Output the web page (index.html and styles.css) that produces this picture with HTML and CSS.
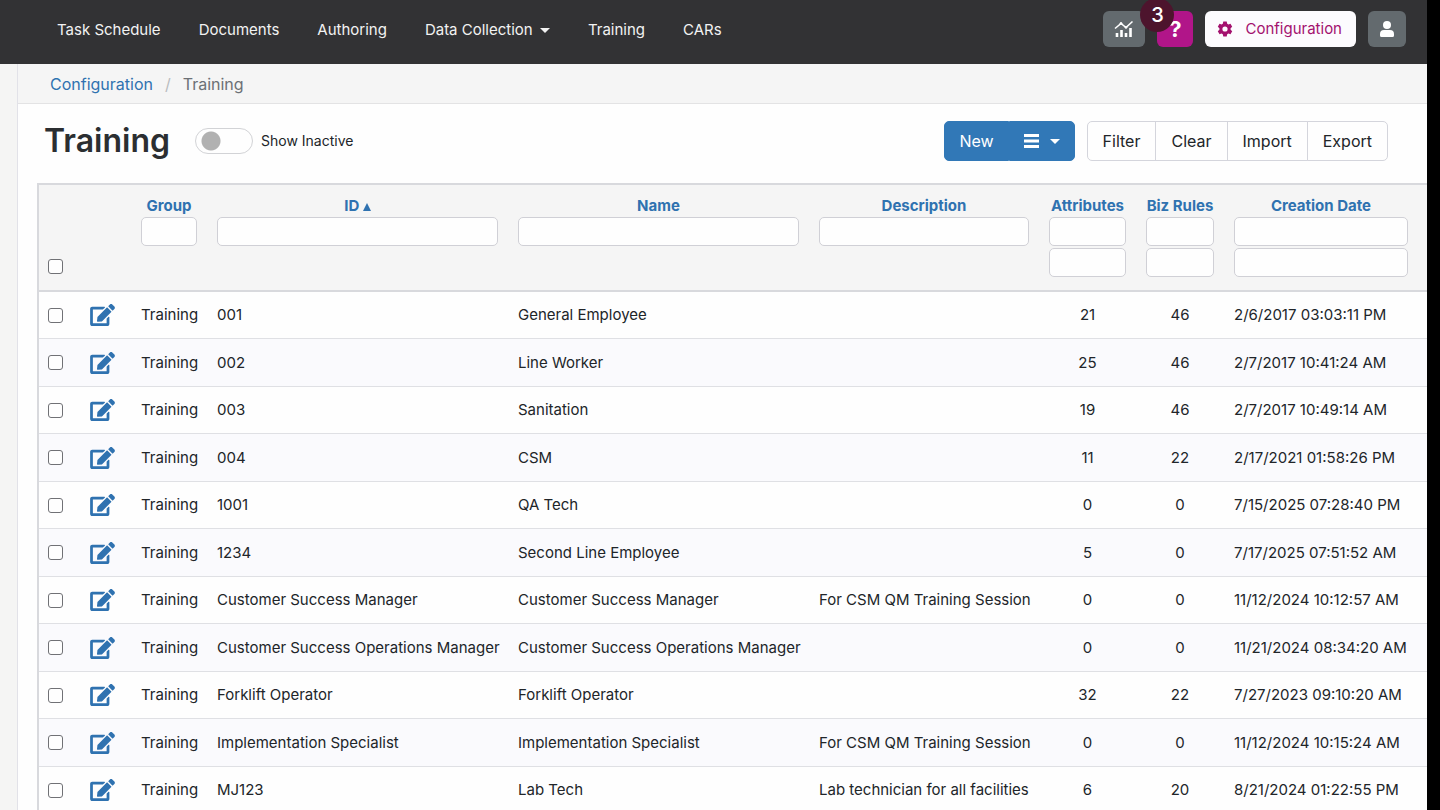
FILE: index.html
```html
<!DOCTYPE html>
<html lang="en">
<head>
<meta charset="utf-8">
<title>Training</title>
<link rel="stylesheet" href="styles.css">
</head>
<body>
<svg class="sprite" aria-hidden="true">
  <symbol id="edit" viewBox="0 0 576 512">
    <path fill="currentColor" d="M402.600 83.200l90.200 90.200c3.800 3.800 3.800 10 0 13.800L274.400 405.600l-92.800 10.300c-12.400 1.400-22.900-9.100-21.500-21.500l10.300-92.800L388.800 83.200c3.800-3.800 10-3.800 13.800 0zm162-22.900l-48.800-48.800c-15.200-15.200-39.900-15.200-55.200 0l-35.400 35.400c-3.800 3.800-3.800 10 0 13.800l90.200 90.200c3.800 3.800 10 3.800 13.800 0l35.400-35.400c15.200-15.300 15.200-40 0-55.200zM384 346.200V448H64V128h229.800c3.200 0 6.200-1.300 8.500-3.500l40-40c7.600-7.600 2.200-20.500-8.500-20.500H48C21.500 64 0 85.500 0 112v352c0 26.500 21.500 48 48 48h352c26.500 0 48-21.500 48-48V306.200c0-10.700-12.900-16-20.500-8.500l-40 40c-2.200 2.300-3.500 5.300-3.500 8.500z"/>
  </symbol>
</svg>
<div class="app">
  <header class="topbar">
    <nav class="nav">
      <a href="#">Task Schedule</a>
      <a href="#">Documents</a>
      <a href="#">Authoring</a>
      <a href="#">Data Collection <span class="caret"></span></a>
      <a href="#">Training</a>
      <a href="#">CARs</a>
    </nav>
    <div class="tools">
      <button class="tool tool-chart" aria-label="Reports">
        <svg width="20" height="18" viewBox="0 0 20 18" fill="none" stroke="currentColor"><path d="M3 17v-4M7.500 17v-7M12 17v-4M16.500 17V8" stroke-width="2.600"/><path d="M1 8.500l6-5 5 4 6.500-6" stroke-width="1.600"/><circle cx="7" cy="3.500" r="1" fill="currentColor"/><circle cx="12" cy="7.300" r="1" fill="currentColor"/></svg>
      </button>
      <button class="tool tool-help" aria-label="Help">?<span class="count">3</span></button>
      <button class="tool tool-config">
        <svg width="16" height="16" viewBox="0 0 16 16"><path fill="currentColor" fill-rule="evenodd" d="M6.300.6h3.400l.5 2.100 1.200.7 2.100-.6 1.700 2.900-1.600 1.500v1.600l1.600 1.500-1.700 2.900-2.100-.6-1.200.7-.5 2.100H6.300l-.5-2.100-1.200-.7-2.100.6-1.700-2.900 1.600-1.500V7.200L.8 5.700l1.700-2.900 2.100.6 1.200-.7zM8 5.400a2.600 2.600 0 1 0 0 5.200 2.600 2.600 0 0 0 0-5.200z"/></svg>
        Configuration
      </button>
      <button class="tool tool-user" aria-label="Account">
        <svg width="14" height="16" viewBox="0 0 14 16" fill="currentColor"><circle cx="7" cy="4" r="4"/><path d="M4 9h6a4 4 0 0 1 4 4v1.500a1.500 1.500 0 0 1-1.500 1.500h-11A1.500 1.500 0 0 1 0 14.500V13a4 4 0 0 1 4-4z"/></svg>
      </button>
    </div>
  </header>
  <div class="body">
    <aside class="rail"></aside>
    <main class="main">
      <nav class="crumbs"><a href="#">Configuration</a><span class="sep">/</span><span>Training</span></nav>
      <div class="heading">
        <h1>Training</h1>
        <label class="switch"><input type="checkbox" role="switch"><span>Show Inactive</span></label>
        <div class="group group-primary">
          <button>New</button>
          <button class="more" aria-label="More actions"><svg width="15" height="14" viewBox="0 0 15 14" fill="currentColor"><path d="M0 0h15v3H0zM0 5.500h15v3H0zM0 11h15v3H0z"/></svg><span class="caret"></span></button>
        </div>
        <div class="group group-plain">
          <button>Filter</button><button>Clear</button><button>Import</button><button>Export</button>
        </div>
      </div>
      <div class="grid">
        <table>
          <colgroup><col class="c-check"><col class="c-edit"><col class="c-group"><col class="c-text"><col class="c-text"><col class="c-desc"><col class="c-attr"><col class="c-biz"><col class="c-date"><col></colgroup>
          <thead>
            <tr>
              <th class="pick"><input type="checkbox" aria-label="Select all"></th>
              <th></th>
              <th><a href="#">Group</a><input type="text" aria-label="Group"></th>
              <th><a href="#">ID <span class="sort"></span></a><input type="text" aria-label="ID"></th>
              <th><a href="#">Name</a><input type="text" aria-label="Name"></th>
              <th><a href="#">Description</a><input type="text" aria-label="Description"></th>
              <th><a href="#">Attributes</a><input type="text" aria-label="Attributes from"><input type="text" aria-label="Attributes to"></th>
              <th><a href="#">Biz Rules</a><input type="text" aria-label="Biz Rules from"><input type="text" aria-label="Biz Rules to"></th>
              <th><a href="#">Creation Date</a><input type="text" aria-label="Creation Date from"><input type="text" aria-label="Creation Date to"></th>
              <th></th>
            </tr>
          </thead>
          <tbody>
            <tr><td><input type="checkbox" aria-label="Select 001"></td><td><a href="#" aria-label="Edit 001"><svg class="edit"><use href="#edit"/></svg></a></td><td>Training</td><td>001</td><td>General Employee</td><td></td><td class="num">21</td><td class="num">46</td><td>2/6/2017 03:03:11 PM</td><td></td></tr>
            <tr><td><input type="checkbox" aria-label="Select 002"></td><td><a href="#" aria-label="Edit 002"><svg class="edit"><use href="#edit"/></svg></a></td><td>Training</td><td>002</td><td>Line Worker</td><td></td><td class="num">25</td><td class="num">46</td><td>2/7/2017 10:41:24 AM</td><td></td></tr>
            <tr><td><input type="checkbox" aria-label="Select 003"></td><td><a href="#" aria-label="Edit 003"><svg class="edit"><use href="#edit"/></svg></a></td><td>Training</td><td>003</td><td>Sanitation</td><td></td><td class="num">19</td><td class="num">46</td><td>2/7/2017 10:49:14 AM</td><td></td></tr>
            <tr><td><input type="checkbox" aria-label="Select 004"></td><td><a href="#" aria-label="Edit 004"><svg class="edit"><use href="#edit"/></svg></a></td><td>Training</td><td>004</td><td>CSM</td><td></td><td class="num">11</td><td class="num">22</td><td>2/17/2021 01:58:26 PM</td><td></td></tr>
            <tr><td><input type="checkbox" aria-label="Select 1001"></td><td><a href="#" aria-label="Edit 1001"><svg class="edit"><use href="#edit"/></svg></a></td><td>Training</td><td>1001</td><td>QA Tech</td><td></td><td class="num">0</td><td class="num">0</td><td>7/15/2025 07:28:40 PM</td><td></td></tr>
            <tr><td><input type="checkbox" aria-label="Select 1234"></td><td><a href="#" aria-label="Edit 1234"><svg class="edit"><use href="#edit"/></svg></a></td><td>Training</td><td>1234</td><td>Second Line Employee</td><td></td><td class="num">5</td><td class="num">0</td><td>7/17/2025 07:51:52 AM</td><td></td></tr>
            <tr><td><input type="checkbox" aria-label="Select Customer Success Manager"></td><td><a href="#" aria-label="Edit Customer Success Manager"><svg class="edit"><use href="#edit"/></svg></a></td><td>Training</td><td>Customer Success Manager</td><td>Customer Success Manager</td><td>For CSM QM Training Session</td><td class="num">0</td><td class="num">0</td><td>11/12/2024 10:12:57 AM</td><td></td></tr>
            <tr><td><input type="checkbox" aria-label="Select Customer Success Operations Manager"></td><td><a href="#" aria-label="Edit Customer Success Operations Manager"><svg class="edit"><use href="#edit"/></svg></a></td><td>Training</td><td>Customer Success Operations Manager</td><td>Customer Success Operations Manager</td><td></td><td class="num">0</td><td class="num">0</td><td>11/21/2024 08:34:20 AM</td><td></td></tr>
            <tr><td><input type="checkbox" aria-label="Select Forklift Operator"></td><td><a href="#" aria-label="Edit Forklift Operator"><svg class="edit"><use href="#edit"/></svg></a></td><td>Training</td><td>Forklift Operator</td><td>Forklift Operator</td><td></td><td class="num">32</td><td class="num">22</td><td>7/27/2023 09:10:20 AM</td><td></td></tr>
            <tr><td><input type="checkbox" aria-label="Select Implementation Specialist"></td><td><a href="#" aria-label="Edit Implementation Specialist"><svg class="edit"><use href="#edit"/></svg></a></td><td>Training</td><td>Implementation Specialist</td><td>Implementation Specialist</td><td>For CSM QM Training Session</td><td class="num">0</td><td class="num">0</td><td>11/12/2024 10:15:24 AM</td><td></td></tr>
            <tr><td><input type="checkbox" aria-label="Select MJ123"></td><td><a href="#" aria-label="Edit MJ123"><svg class="edit"><use href="#edit"/></svg></a></td><td>Training</td><td>MJ123</td><td>Lab Tech</td><td>Lab technician for all facilities</td><td class="num">6</td><td class="num">20</td><td>8/21/2024 01:22:55 PM</td><td></td></tr>
          </tbody>
        </table>
      </div>
    </main>
  </div>
</div>
</body>
</html>
```
FILE: styles.css
```css
* { box-sizing: border-box; }
body {
  margin: 0;
  padding-right: 13px;
  background: #000;
  color: #212529;
  font: 15px/20px Inter, "Liberation Sans", sans-serif;
}
a { color: #2f72b0; text-decoration: none; }
button { font: inherit; cursor: pointer; }
.sprite { display: none; }
.app { display: flex; flex-direction: column; height: 100vh; overflow: hidden; background: #fefefe; }

.topbar {
  display: flex;
  flex: none;
  justify-content: space-between;
  align-items: flex-start;
  height: 64px;
  padding: 11px 21px 0 57px;
  background: #323234;
}
.nav { display: flex; gap: 38px; line-height: 38px; }
.nav a { color: #f2f2f2; white-space: nowrap; }
.caret {
  display: inline-block;
  margin-left: 3px;
  border: 5px solid transparent;
  border-top-color: currentColor;
  border-bottom: 0;
  vertical-align: 2px;
}
.tools { display: flex; gap: 12px; }
.tool {
  display: flex;
  align-items: center;
  justify-content: center;
  height: 36px;
  padding: 0;
  border: 0;
  border-radius: 6px;
  background: #636a6e;
  color: #fff;
}
.tool-chart { width: 42px; }
.tool-help { position: relative; width: 36px; background: #b11589; font-size: 22px; font-weight: 700; }
.count {
  position: absolute;
  top: -13px;
  left: -17px;
  width: 34px;
  height: 34px;
  border-radius: 50%;
  background: #4d142d;
  font-size: 20px;
  font-weight: 500;
  line-height: 34px;
}
.tool-config { gap: 12px; padding: 0 14px 0 12px; background: #fcfbfe; color: #a3116e; }
.tool-user { width: 38px; }

.body { display: flex; flex: 1; min-height: 0; }
.rail { flex: none; width: 18px; border-right: 1px solid #e2e2e8; background: #f5f5f4; }
.main { flex: 1; min-width: 0; }
.crumbs {
  display: flex;
  align-items: center;
  height: 40px;
  padding-left: 32px;
  border-bottom: 1px solid #e3e3e4;
  background: #f5f5f5;
  color: #6c7075;
  font-size: 16px;
}
.sep { margin: 0 12px; color: #b9bcc0; }
.heading { display: flex; align-items: center; height: 79px; padding: 0 39px 5px 26px; }
h1 { margin: 0 25px 0 0; font-size: 32px; font-weight: 600; line-height: 44px; color: #2b2e31; }
.switch { display: flex; align-items: center; gap: 8px; margin-right: auto; font-size: 14px; white-space: nowrap; }
.switch input {
  appearance: none;
  width: 58px;
  height: 26px;
  margin: 0;
  border: 1px solid #d2d3d6;
  border-radius: 13px;
  background: radial-gradient(circle at 15px 12px, #b1b1b1 9px, transparent 10px) #fefefe;
}
.group { display: flex; height: 40px; font-size: 16px; }
.group button { border: 1px solid #d4d5dc; background: #fefefe; color: #212529; white-space: nowrap; }
.group button:first-child { border-radius: 5px 0 0 5px; }
.group button:last-child { border-radius: 0 5px 5px 0; }
.group-primary { margin-right: 12px; }
.group-primary button { padding: 0 14px; border-color: #3178b7; background: #3178b7; color: #fff; }
.group-primary .more { display: flex; align-items: center; gap: 8px; }
.group-plain button { padding: 0 15px; }
.group-plain button + button { margin-left: -1px; }

.grid { margin-left: 19px; border: solid #d8d9dd; border-width: 2px 0 0 2px; overflow: hidden; }
table { width: 100%; border-collapse: separate; border-spacing: 0; table-layout: fixed; }
.c-check { width: 41px; }
.c-edit { width: 51px; }
.c-group { width: 76px; }
.c-text { width: 301px; }
.c-desc { width: 230px; }
.c-attr { width: 97px; }
.c-biz { width: 88px; }
.c-date { width: 194px; }
th { height: 106px; padding: 11px 10px; border-bottom: 2px solid #d8d9dd; background: #f5f5f5; vertical-align: top; text-align: center; }
th a { display: block; margin-bottom: 1px; white-space: nowrap; }
.sort { display: inline-block; border: 4px solid transparent; border-top: 0; border-bottom: 8px solid currentColor; }
th input[type="text"] {
  display: block;
  width: 100%;
  height: 29px;
  margin-bottom: 2px;
  border: 1px solid #d0d0d6;
  border-radius: 5px;
  background: #fefefe;
}
th.pick { padding-bottom: 16px; vertical-align: bottom; text-align: left; }
input[type="checkbox"]:not([role]) {
  appearance: none;
  display: block;
  width: 15px;
  height: 15px;
  margin: 0;
  border: 1px solid #707175;
  border-radius: 3px;
  background: #fefefe;
}
td { height: 47px; padding: 0 10px; border-bottom: 1px solid #dfe0e4; white-space: nowrap; }
tbody tr:nth-child(even) td { height: 48px; background: #fafafd; }
th:first-child, td:first-child { padding-left: 9px; }
.num { text-align: center; }
.edit { display: block; width: 25px; height: 22px; }
```
